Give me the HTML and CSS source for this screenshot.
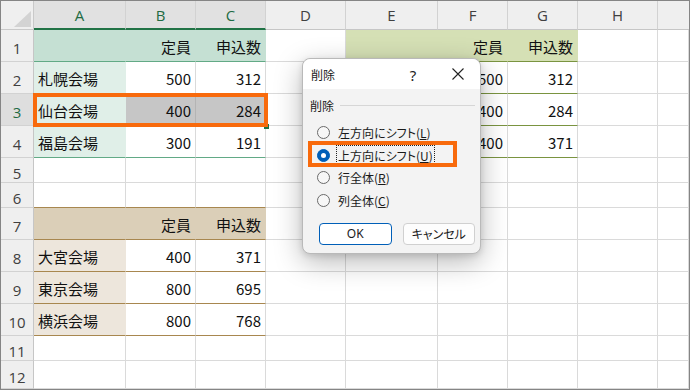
FILE: index.html
```html
<!DOCTYPE html>
<html lang="ja">
<head>
<meta charset="utf-8">
<title>削除</title>
<link rel="stylesheet" href="styles.css">
</head>
<body>
<div class="frame">
  <div class="sheet">
    <!-- header row -->
    <div class="c corner"><svg width="17" height="16" viewBox="0 0 17 16"><polygon points="17,0 17,16 0,16" fill="#d3d3d3"/></svg></div>
    <div class="c ch sel">A</div>
    <div class="c ch sel">B</div>
    <div class="c ch sel">C</div>
    <div class="c ch">D</div>
    <div class="c ch">E</div>
    <div class="c ch">F</div>
    <div class="c ch">G</div>
    <div class="c ch">H</div>
    <div class="c ch last"></div>

    <!-- row 1 -->
    <div class="c rh">1</div>
    <div class="c t1h"></div>
    <div class="c t1h r">定員</div>
    <div class="c t1h r">申込数</div>
    <div class="c"></div>
    <div class="c t2h"></div>
    <div class="c t2h r">定員</div>
    <div class="c t2h r">申込数</div>
    <div class="c"></div>
    <div class="c"></div>

    <!-- row 2 -->
    <div class="c rh">2</div>
    <div class="c t1a">札幌会場</div>
    <div class="c r l1">500</div>
    <div class="c r l1">312</div>
    <div class="c"></div>
    <div class="c t2a"></div>
    <div class="c r l2">500</div>
    <div class="c r l2">312</div>
    <div class="c"></div>
    <div class="c"></div>

    <!-- row 3 -->
    <div class="c rh rsel">3</div>
    <div class="c t1a">仙台会場</div>
    <div class="c r l1 hl">400</div>
    <div class="c r l1 hl">284</div>
    <div class="c"></div>
    <div class="c t2a"></div>
    <div class="c r l2">400</div>
    <div class="c r l2">284</div>
    <div class="c"></div>
    <div class="c"></div>

    <!-- row 4 -->
    <div class="c rh">4</div>
    <div class="c t1a">福島会場</div>
    <div class="c r l1">300</div>
    <div class="c r l1">191</div>
    <div class="c"></div>
    <div class="c t2a"></div>
    <div class="c r l2">400</div>
    <div class="c r l2">371</div>
    <div class="c"></div>
    <div class="c"></div>

    <!-- row 5 -->
    <div class="c rh">5</div>
    <div class="c"></div><div class="c"></div><div class="c"></div><div class="c"></div>
    <div class="c"></div><div class="c"></div><div class="c"></div><div class="c"></div><div class="c"></div>

    <!-- row 6 -->
    <div class="c rh">6</div>
    <div class="c l3"></div><div class="c l3"></div><div class="c l3"></div><div class="c"></div>
    <div class="c"></div><div class="c"></div><div class="c"></div><div class="c"></div><div class="c"></div>

    <!-- row 7 -->
    <div class="c rh">7</div>
    <div class="c t3h"></div>
    <div class="c t3h r">定員</div>
    <div class="c t3h r">申込数</div>
    <div class="c"></div><div class="c"></div><div class="c"></div><div class="c"></div><div class="c"></div><div class="c"></div>

    <!-- row 8 -->
    <div class="c rh">8</div>
    <div class="c t3a">大宮会場</div>
    <div class="c r l3">400</div>
    <div class="c r l3">371</div>
    <div class="c"></div><div class="c"></div><div class="c"></div><div class="c"></div><div class="c"></div><div class="c"></div>

    <!-- row 9 -->
    <div class="c rh">9</div>
    <div class="c t3a">東京会場</div>
    <div class="c r l3">800</div>
    <div class="c r l3">695</div>
    <div class="c"></div><div class="c"></div><div class="c"></div><div class="c"></div><div class="c"></div><div class="c"></div>

    <!-- row 10 -->
    <div class="c rh">10</div>
    <div class="c t3a">横浜会場</div>
    <div class="c r l3">800</div>
    <div class="c r l3">768</div>
    <div class="c"></div><div class="c"></div><div class="c"></div><div class="c"></div><div class="c"></div><div class="c"></div>

    <!-- row 11 -->
    <div class="c rh">11</div>
    <div class="c"></div><div class="c"></div><div class="c"></div><div class="c"></div>
    <div class="c"></div><div class="c"></div><div class="c"></div><div class="c"></div><div class="c"></div>

    <!-- row 12 -->
    <div class="c rh">12</div>
    <div class="c"></div><div class="c"></div><div class="c"></div><div class="c"></div>
    <div class="c"></div><div class="c"></div><div class="c"></div><div class="c"></div><div class="c"></div>
  </div>

  <div class="handle"></div>
  <div class="mark mark-sel"></div>

  <div class="dialog">
    <div class="titlebar">
      <span class="title">削除</span>
      <span class="tbtn q">?</span>
      <span class="tbtn"><svg width="12" height="12" viewBox="0 0 12 12"><path d="M0.5 0.5 L11.5 11.5 M11.5 0.5 L0.5 11.5" stroke="#222" stroke-width="1.1"/></svg></span>
    </div>
    <div class="dbody">
      <div class="group"><span>削除</span><span class="rule"></span></div>
      <div class="options">
        <div class="opt"><span class="radio"></span><span class="lbl">左方向にシフト(<u>L</u>)</span></div>
        <div class="opt"><span class="radio on"></span><span class="lbl focus">上方向にシフト(<u>U</u>)</span></div>
        <div class="opt"><span class="radio"></span><span class="lbl">行全体(<u>R</u>)</span></div>
        <div class="opt"><span class="radio"></span><span class="lbl">列全体(<u>C</u>)</span></div>
      </div>
      <div class="buttons">
        <span class="btn default">OK</span>
        <span class="btn">キャンセル</span>
      </div>
    </div>
    <div class="mark mark-opt"></div>
  </div>
</div>
</body>
</html>
```

FILE: styles.css
```css
html, body {
  margin: 0;
  padding: 0;
  background: #ffffff;
}

.frame {
  position: relative;
  width: 690px;
  height: 390px;
  box-sizing: border-box;
  border: 1px solid #858585;
  overflow: hidden;
  font-family: "Noto Sans CJK JP", "Noto Sans", sans-serif;
  font-feature-settings: "palt";
}

.sheet {
  display: grid;
  grid-template-columns: 33px 92px 70px 70px 80px 92px 70px 70px 80px 1fr;
  grid-template-rows: 29px repeat(4, 32px) repeat(2, 25px) repeat(4, 32px) 25px 1fr;
  height: 100%;
  background: #ffffff;
}

.c {
  box-sizing: border-box;
  border-right: 1px solid #dadada;
  border-bottom: 1px solid #dadada;
  display: flex;
  align-items: center;
  padding: 1px 4px 0 4px;
  font-size: 15px;
  color: #111;
  white-space: nowrap;
  overflow: hidden;
}

.r {
  justify-content: flex-end;
}

/* headers */
.corner {
  background: #efefef;
  border-right-color: #c9c9c9;
  border-bottom-color: #c9c9c9;
  align-items: flex-end;
  justify-content: flex-end;
  padding: 0 2px 2px 0;
}

.ch {
  background: #efefef;
  border-right-color: #d2d2d2;
  border-bottom-color: #c6c6c6;
  justify-content: center;
  font-family: "Open Sans", "Noto Sans", sans-serif;
  font-size: 15px;
  color: #404040;
  padding: 0;
}

.ch.sel {
  background: #e1e1e1;
  color: #1e6b43;
  border-bottom: 2px solid #217346;
}

.ch.last {
  border-right: none;
}

.rh {
  background: #efefef;
  border-right-color: #c6c6c6;
  border-bottom-color: #d2d2d2;
  justify-content: center;
  font-family: "Open Sans", "Noto Sans", sans-serif;
  font-size: 15px;
  color: #404040;
  padding: 5px 0 0 0;
}

.rh.rsel {
  background: #dedede;
  color: #1e6b43;
}

/* table 1 (teal) */
.t1h {
  background: #c5e0d3;
  border-right-color: transparent;
  border-bottom-color: #62aa86;
}
.t1a {
  background: #e0efe8;
  border-right-color: transparent;
  border-bottom-color: #62aa86;
}
.l1 {
  border-bottom-color: #62aa86;
}
.hl {
  background: #c6c6c6;
  border-right-color: #b4b4b4;
}

/* table 2 (olive) */
.t2h {
  background: #d5e0b5;
  border-right-color: transparent;
  border-bottom-color: #7a9440;
}
.t2a {
  background: #ebf1de;
  border-right-color: transparent;
  border-bottom-color: #7a9440;
}
.l2 {
  border-bottom-color: #7a9440;
}

/* table 3 (tan) */
.t3h {
  background: #dbcfb8;
  border-right-color: transparent;
  border-bottom-color: #a8874f;
}
.t3a {
  background: #ede6dc;
  border-right-color: transparent;
  border-bottom-color: #a8874f;
}
.l3 {
  border-bottom-color: #a8874f;
}

/* overlays */
.handle {
  position: absolute;
  left: 263px;
  top: 123px;
  width: 5px;
  height: 5px;
  background: #217346;
}

.mark {
  position: absolute;
  box-sizing: border-box;
  border: 4px solid #f86a0c;
}

.mark-sel {
  left: 32px;
  top: 92px;
  width: 235px;
  height: 34px;
}

/* dialog */
.dialog {
  position: absolute;
  left: 301px;
  top: 57px;
  width: 179px;
  height: 196px;
  box-sizing: border-box;
  border: 1px solid #b9b9b9;
  border-radius: 8px;
  background: #f3f3f3;
  box-shadow: 0 8px 28px rgba(0, 0, 0, 0.28), 0 2px 6px rgba(0, 0, 0, 0.12);
  display: flex;
  flex-direction: column;
  font-size: 12px;
  color: #1a1a1a;
}

.titlebar {
  height: 30px;
  flex: none;
  background: #ffffff;
  border-radius: 8px 8px 0 0;
  display: flex;
  align-items: center;
  padding-left: 8px;
}

.title {
  flex: 1;
  font-size: 12px;
  padding-top: 1px;
}

.tbtn {
  width: 44px;
  height: 30px;
  display: flex;
  align-items: center;
  justify-content: center;
  color: #222;
}

.tbtn.q {
  font-family: "Noto Sans", sans-serif;
  font-size: 15px;
  padding-top: 1px;
  box-sizing: border-box;
}

.tbtn:last-child {
  width: 45px;
}

.dbody {
  flex: 1;
  padding: 7px 5px 0 7px;
  display: flex;
  flex-direction: column;
}

.group {
  height: 18px;
  display: flex;
  align-items: center;
  gap: 6px;
}

.rule {
  flex: 1;
  border-top: 1px solid #d6d6d6;
}

.options {
  margin-top: 7px;
  padding-left: 7px;
  display: flex;
  flex-direction: column;
}

.opt {
  height: 22.7px;
  display: flex;
  align-items: center;
  gap: 8px;
}

.radio {
  width: 13px;
  height: 13px;
  box-sizing: border-box;
  border: 1px solid #6a6a6a;
  border-radius: 50%;
  background: #f7f7f7;
  flex: none;
  display: flex;
  align-items: center;
  justify-content: center;
}

.radio.on {
  background: #005fb8;
  border-color: #005fb8;
}

.radio.on::after {
  content: "";
  width: 5px;
  height: 5px;
  border-radius: 50%;
  background: #ffffff;
}

.lbl {
  font-size: 12px;
  line-height: 17px;
}

.lbl.focus {
  outline: 1px dotted #222;
  outline-offset: 1px;
}

.buttons {
  margin-top: 11px;
  padding-left: 9px;
  display: flex;
  gap: 11px;
}

.btn {
  width: 73px;
  height: 22px;
  box-sizing: border-box;
  border: 1px solid #d0d0d0;
  border-radius: 4px;
  background: #fdfdfd;
  display: flex;
  align-items: center;
  justify-content: center;
  font-size: 12px;
}

.btn.default {
  border-color: #005fb8;
  background: #ffffff;
  font-family: "Noto Sans", sans-serif;
}

.mark-opt {
  left: 5px;
  top: 82px;
  width: 149px;
  height: 26px;
}
```
